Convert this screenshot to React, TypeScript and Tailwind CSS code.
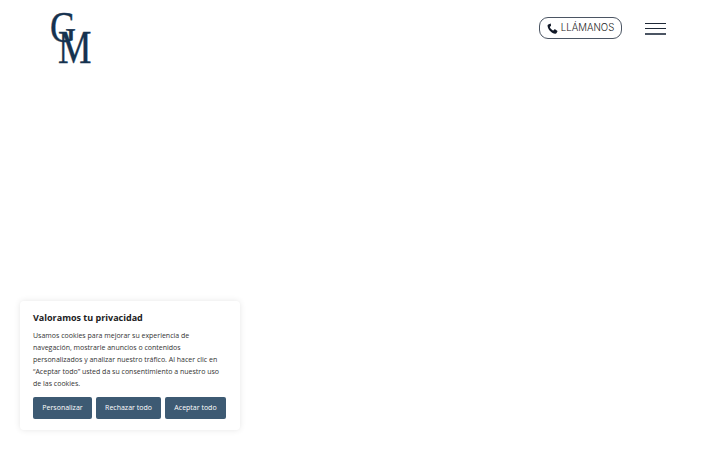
import React from "react";

function Phone() {
  return (
    <svg width="11" height="11" viewBox="0 0 24 24" fill="#111827" className="shrink-0">
      <path d="M6.600 1.500 2.800 3.200C1.600 3.800 1 5 1.200 6.400c.8 4.500 3 8.600 6.200 11.600 3 2.900 6.600 4.800 10.400 5.500 1.300.2 2.500-.4 3.100-1.500l1.800-3.500c.3-.6.1-1.300-.5-1.700l-4.600-2.900c-.5-.3-1.200-.3-1.700.2l-2 2c-.3.3-.7.3-1 .2-1.500-.8-2.800-1.900-4-3.200-1.100-1.200-2-2.500-2.700-3.900-.2-.4-.1-.8.2-1.100l2-1.800c.5-.4.600-1.100.3-1.700L8.200 2c-.3-.6-1-.8-1.600-.5Z" />
    </svg>
  );
}

function Logo() {
  return (
    <div className="relative w-[46px] h-[56px] text-[#15324f] font-['Liberation_Serif',serif] leading-none [-webkit-text-stroke:0.4px_#15324f]">
      <span className="absolute left-0 top-[-6px] text-[45px] leading-none scale-x-[0.8] origin-left">G</span>
      <span className="absolute left-[8px] top-[13px] text-[47px] leading-none scale-x-[0.8] origin-left">M</span>
    </div>
  );
}

export default function App() {
  return (
    <div className="relative w-[720px] h-[450px] overflow-hidden bg-white font-['Open_Sans',sans-serif]">
      <header className="flex items-start pl-[50px] pr-[54px] pt-[11px]">
        <Logo />
        <div className="ml-auto mt-[6px] flex items-center">
          <button className="flex items-center justify-center gap-[3px] w-[83px] h-[22px] rounded-[9px] border border-[#4b5563] font-['Inter',sans-serif] font-light text-[9.7px] text-[#222]">
            <Phone />
            <span className="mt-[1px]">LLÁMANOS</span>
          </button>
          <div className="ml-[23px] mt-[1px] flex flex-col gap-[4px] w-[21px]">
            <span className="h-px bg-[#1f2937]" />
            <span className="h-px bg-[#1f2937]" />
            <span className="h-[2px] bg-[#4b5563]" />
          </div>
        </div>
      </header>

      <div className="absolute left-[20px] top-[301px] w-[220px] h-[129px] rounded-[4px] bg-white shadow-[0_0_6px_rgba(0,0,0,0.1)] pl-[13px] pr-[13px] pt-[9px]">
        <h2 className="text-[9px] leading-[16px] font-bold text-[#212121]">Valoramos tu privacidad</h2>
        <p className="mt-[4px] text-[7px] leading-[12px] text-[#333]">
          Usamos cookies para mejorar su experiencia de navegación, mostrarle anuncios o contenidos personalizados y analizar nuestro tráfico. Al hacer clic en “Aceptar todo” usted da su consentimiento a nuestro uso de las cookies.
        </p>
        <div className="mt-[7px] flex gap-[4px]">
          <button className="w-[59px] h-[22px] rounded-[2px] bg-[#3d5a73] text-[7px] text-white">Personalizar</button>
          <button className="w-[65px] h-[22px] rounded-[2px] bg-[#3d5a73] text-[7px] text-white">Rechazar todo</button>
          <button className="w-[61px] h-[22px] rounded-[2px] bg-[#3d5a73] text-[7px] text-white">Aceptar todo</button>
        </div>
      </div>
    </div>
  );
}
